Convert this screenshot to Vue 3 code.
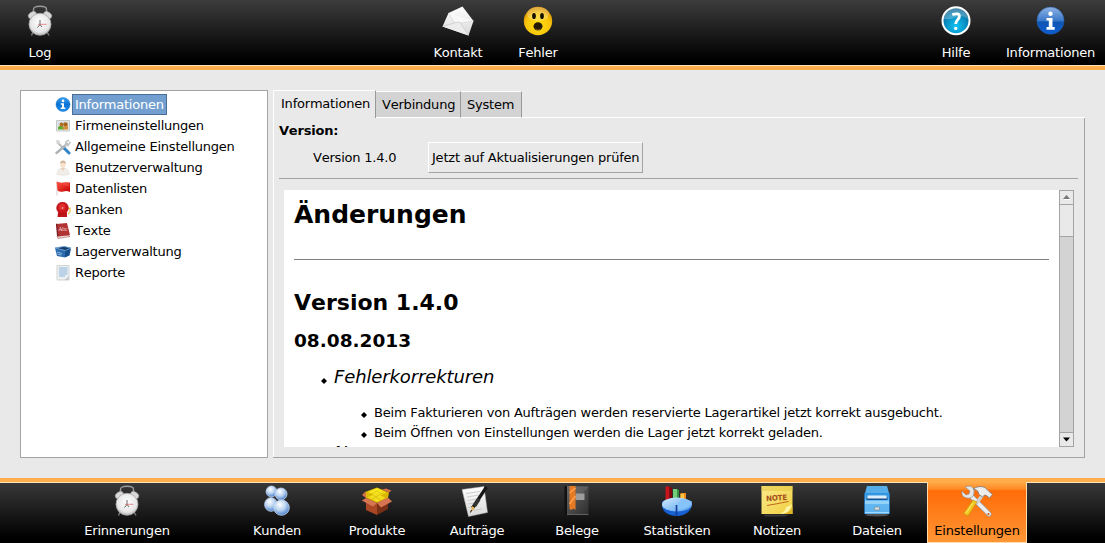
<script setup>
const topLeft = [{ icon: 'clock', label: 'Log' }]
const topCenter = [
  { icon: 'mail', label: 'Kontakt' },
  { icon: 'smiley', label: 'Fehler' },
]
const topRight = [
  { icon: 'help', label: 'Hilfe' },
  { icon: 'info', label: 'Informationen', wide: true },
]
const tree = [
  { icon: 't-info', label: 'Informationen', selected: true },
  { icon: 't-firm', label: 'Firmeneinstellungen' },
  { icon: 't-tools', label: 'Allgemeine Einstellungen' },
  { icon: 't-user', label: 'Benutzerverwaltung' },
  { icon: 't-flag', label: 'Datenlisten' },
  { icon: 't-bell', label: 'Banken' },
  { icon: 't-book', label: 'Texte' },
  { icon: 't-box', label: 'Lagerverwaltung' },
  { icon: 't-report', label: 'Reporte' },
]
const modules = [
  { icon: 'clock', label: 'Erinnerungen', gap: true },
  { icon: 'people', label: 'Kunden' },
  { icon: 'box', label: 'Produkte' },
  { icon: 'paper', label: 'Aufträge' },
  { icon: 'binder', label: 'Belege' },
  { icon: 'chart', label: 'Statistiken' },
  { icon: 'note', label: 'Notizen' },
  { icon: 'cabinet', label: 'Dateien' },
  { icon: 'tools', label: 'Einstellungen', active: true },
]
</script>

<template>
  <div class="window">
    <svg class="defs" width="0" height="0" aria-hidden="true">
      <defs>
        <linearGradient id="gBlue" x1="0" y1="0" x2="0" y2="1"><stop offset="0" stop-color="#8fb4e6" /><stop offset=".5" stop-color="#3a78c8" /><stop offset=".55" stop-color="#0f56b4" /><stop offset="1" stop-color="#0b5cd0" /></linearGradient>
        <radialGradient id="gHelp" cx=".5" cy=".7" r=".65"><stop offset="0" stop-color="#10c4f4" /><stop offset=".6" stop-color="#0a8cc0" /><stop offset="1" stop-color="#0b5f8c" /></radialGradient>
        <radialGradient id="gFace" cx=".5" cy=".65" r=".6"><stop offset="0" stop-color="#ffe00c" /><stop offset=".7" stop-color="#f8c40c" /><stop offset="1" stop-color="#d99406" /></radialGradient>
        <radialGradient id="gDial" cx=".5" cy=".4" r=".6"><stop offset="0" stop-color="#fff" /><stop offset=".75" stop-color="#e6e6e6" /><stop offset="1" stop-color="#b4b4b4" /></radialGradient>
        <radialGradient id="gPerson" cx=".4" cy=".3" r=".75"><stop offset="0" stop-color="#fff" /><stop offset=".5" stop-color="#b9d2f0" /><stop offset="1" stop-color="#3a74c4" /></radialGradient>
        <linearGradient id="gPaper" x1="0" y1="0" x2="0" y2="1"><stop offset="0" stop-color="#fff" /><stop offset="1" stop-color="#d8d8d8" /></linearGradient>
        <linearGradient id="gPie" x1="0" y1="0" x2="1" y2="1"><stop offset="0" stop-color="#d6eeff" /><stop offset="1" stop-color="#4d9cec" /></linearGradient>
        <linearGradient id="gCab" x1="0" y1="0" x2="0" y2="1"><stop offset="0" stop-color="#2b8fdc" /><stop offset=".35" stop-color="#63bbf4" /><stop offset="1" stop-color="#5eb1ec" /></linearGradient>
        <linearGradient id="gNote" x1="0" y1="0" x2="1" y2="1"><stop offset="0" stop-color="#fbeb8e" /><stop offset="1" stop-color="#f0cf3e" /></linearGradient>
        <linearGradient id="gSmall" x1="0" y1="0" x2="0" y2="1"><stop offset="0" stop-color="#3aa2f0" /><stop offset=".5" stop-color="#0a72d4" /><stop offset="1" stop-color="#2490ee" /></linearGradient>
        <linearGradient id="gRed" x1="0" y1="0" x2="1" y2="1"><stop offset="0" stop-color="#ff5a48" /><stop offset="1" stop-color="#c40000" /></linearGradient>
        <linearGradient id="gBinder" x1="0" y1="0" x2="1" y2="1"><stop offset="0" stop-color="#6a6a6a" /><stop offset=".5" stop-color="#4c4c4c" /><stop offset="1" stop-color="#2c2c2c" /></linearGradient>
      </defs>

      <symbol id="clock" viewBox="0 0 32 32">
        <path d="M9.500 7V4.200Q9.500 1.300 16 1.300T22.500 4.200V7" fill="none" stroke="#9b9b9b" stroke-width="1.400" />
        <path d="M9 27 7.500 30.500M23 27l2 3.500" stroke="#777" stroke-width="1.500" />
        <ellipse cx="8.300" cy="10" rx="4.500" ry="3" transform="rotate(-36 8.300 10)" fill="#d9d9d9" stroke="#888" stroke-width=".5" />
        <ellipse cx="23.700" cy="10" rx="4.500" ry="3" transform="rotate(36 23.700 10)" fill="#d9d9d9" stroke="#888" stroke-width=".5" />
        <circle cx="16" cy="19.300" r="11" fill="url(#gDial)" stroke="#a5a5a5" stroke-width=".8" />
        <path d="M16 15V19.500L13.500 22.500M16 19.500l2 2.500" fill="none" stroke="#555" stroke-width=".9" />
        <path d="M14 19.300h8.500" stroke="#e46060" stroke-width=".7" />
      </symbol>
      <symbol id="mail" viewBox="0 0 32 32">
        <path d="M6.500 8 20.500 1.500 31.500 16 26.500 30.500.500 21.500Z" fill="url(#gPaper)" />
        <path d="M6.500 8 13 19 31.500 16" fill="#f8f8f8" stroke="#d4d4d4" stroke-width=".7" />
        <path d="M.5 21.500 14 17.500Q16.500 16 18.500 18L26.500 30.500" fill="#ececec" stroke="#c9c9c9" stroke-width=".7" />
      </symbol>
      <symbol id="smiley" viewBox="0 0 32 32">
        <circle cx="16" cy="16" r="14.200" fill="url(#gFace)" />
        <ellipse cx="16" cy="9" rx="11" ry="7" fill="#fff" opacity=".24" />
        <ellipse cx="12" cy="11" rx="1.900" ry="3.100" fill="#161000" />
        <ellipse cx="20" cy="11" rx="1.900" ry="3.100" fill="#161000" />
        <ellipse cx="16" cy="21.300" rx="4.500" ry="4" fill="#241a04" />
        <path d="M13.500 24Q16 26 18.500 24" stroke="#72591e" fill="none" />
      </symbol>
      <symbol id="help" viewBox="0 0 32 32">
        <circle cx="16" cy="15.700" r="13.500" fill="url(#gHelp)" stroke="#fff" stroke-width="2" />
        <path d="M4 14a12 12 0 0 1 24 0Q22 9 16 12T4 14" fill="#fff" opacity=".25" />
        <path d="M12.300 9.700Q19.500 7.300 19.300 11.500C19.300 14.500 15.600 15 15.700 19" stroke="#fff" stroke-width="2.900" fill="none" />
        <circle cx="15.700" cy="23.400" r="1.700" fill="#fff" />
      </symbol>
      <symbol id="info" viewBox="0 0 32 32">
        <circle cx="15.500" cy="15.700" r="13.600" fill="url(#gBlue)" stroke="#245ba4" stroke-width=".5" />
        <circle cx="15.500" cy="8.700" r="2.200" fill="#fff" />
        <path d="M11.500 13h6v9h2.200v2.800h-8.200V22h2.300v-6.500h-2.300Z" fill="#fff" />
      </symbol>

      <symbol id="people" viewBox="0 0 32 32">
        <g fill="url(#gPerson)" stroke="#c3d9f5" stroke-width=".8">
          <ellipse cx="10" cy="19.500" rx="6.400" ry="6.800" /><circle cx="10.500" cy="6.500" r="5.400" />
          <ellipse cx="20.500" cy="22.700" rx="7.800" ry="7.600" /><circle cx="20" cy="9" r="6" />
        </g>
      </symbol>
      <symbol id="box" viewBox="0 0 32 32">
        <path d="M5 13.500 16 18.500V30L5 25Z" fill="#ad4827" /><path d="M16 18.500 27 12.500V24L16 30Z" fill="#793017" />
        <path d="M4 7 16 2.500 28 7.500 27 13 16 18 5 13Z" fill="#ddb800" />
        <path d="M7 7 16 3 25 7.500 16 12Z" fill="#fae720" /><path d="M7 12 16 8l8 5-8 4Z" fill="#f2dc1c" /><path d="m5 12 11-6 10 6M9 8l12 8M23 7 10 15" stroke="#cdb308" stroke-width=".6" fill="none" />
        <path d="M5 13 16 18 12 21.500 .8 15.500ZM27 12.500 16 18 20 22.500 31 16.500Z" fill="#d77553" />
        <path d="m4 7-3 3 4 3v-4ZM28 7.500l2.500-2L25 3.500l-4 1Z" fill="#d87148" />
      </symbol>
      <symbol id="paper" viewBox="0 0 32 32">
        <path d="m1 4.500 22-3 3.500 26-19 4Z" fill="url(#gPaper)" stroke="#ababab" stroke-width=".5" />
        <path d="m5 8.500 14-2M6 12l12-2M6.500 15.500l10-1.500M7 19l9-1.500M8 22.500l5-1M9 26l12-2" stroke="#bcbcbc" stroke-width=".7" />
        <path d="M25.500 2 11.500 23" stroke="#171717" stroke-width="3.200" /><path d="m18 14-4.500 7" stroke="#333" stroke-width="3.600" />
        <path d="m11 21 3 2-4.500 4.500Z" fill="#e4b354" /><path d="m9.500 27.500 1-2.500" stroke="#171717" />
      </symbol>
      <symbol id="binder" viewBox="0 0 32 32">
        <path d="M4 1h23.500v29H4Z" fill="url(#gBinder)" />
        <path d="M14.500 2h13L14.500 16Z" fill="#777" opacity=".35" />
        <path d="M3.500 1h2.500v29H3.500Z" fill="#111" /><path d="M6 29.500h21.500" stroke="#606060" />
        <path d="M14.500 8.500h9v6.500h-9Z" fill="#9c9c9c" /><path d="M8.500 1h6v24l-2-1.500-2.500 1.500-1.500-1.500Z" fill="#e67a22" />
        <path d="m8.500 8 6-5M8.500 19l6-8" stroke="#ff9f50" stroke-width="1.600" />
      </symbol>
      <symbol id="chart" viewBox="0 0 32 32">
        <path d="M4.500 1.500h4v16h-4Z" fill="#c8141c" /><path d="M8.500 1.500 11 3v14H8.500Z" fill="#84060a" />
        <path d="M12 4h4v13h-4Z" fill="#73cd7b" /><path d="m16 4 2 1v12h-2Z" fill="#349142" />
        <path d="M19.500 8H25v11h-5.500Z" fill="#f08a1c" /><path d="M19.500 9H23v9h-3.500Z" fill="#fbc640" />
        <path d="M1 20c0 7 7 11 14.500 11S31 27 31 18L1 16Z" fill="#1760d2" />
        <ellipse cx="16" cy="19.500" rx="15" ry="7" fill="url(#gPie)" />
        <path d="M16 20 21 13.500 31 16.500Q31 22.500 18 25Z" fill="#86c3fa" /><path d="M15.500 20v10.500" stroke="#143b96" stroke-width="1.600" />
      </symbol>
      <symbol id="note" viewBox="0 0 32 32">
        <path d="M2 29.500h27l-5 2H5Z" fill="#555" opacity=".55" />
        <path d="M.5 1h31v28H.500Z" fill="url(#gNote)" /><path d="M.5 1h31v5H.500Z" fill="#e8ca45" opacity=".6" />
        <path d="M31.500 20q-1 8-10 9h10Z" fill="#dcb427" /><path d="M31 19Q27 22 25 22 25 26 19 29 29 29 31 19" fill="#fff5a6" />
        <text x="5" y="15.500" font-size="7.500" font-weight="bold" font-family="DejaVu Sans" fill="#a5501c" transform="rotate(-4 16 14)" textLength="21" lengthAdjust="spacingAndGlyphs">NOTE</text>
        <path d="M6 20.500Q15 19 27.500 16.500" stroke="#c16423" fill="none" />
      </symbol>
      <symbol id="cabinet" viewBox="0 0 32 32">
        <ellipse cx="16" cy="30" rx="12" ry="1.500" fill="#8a8a8a" opacity=".5" />
        <path d="m6 1h20l2 7H4Z" fill="#55aeea" /><path d="M3 8h26v21H3Z" fill="url(#gCab)" />
        <path d="M5.500 12h21v3h-21Z" fill="#164f93" /><path d="M7 10.500h18l1 3H6Z" fill="#d9edfa" />
        <path d="M3 16h26v3H3Z" fill="#94d2f8" /><path d="M13.500 22h5v3h-5Z" fill="#ddd" stroke="#7794a7" stroke-width=".8" />
        <path d="M3.500 8v21M28.500 8v21" stroke="#226baf" /><path d="M4 27.500h24" stroke="#a0dbff" />
      </symbol>
      <symbol id="tools" viewBox="0 0 32 32">
        <path d="M10 11 28 29" stroke="#999" stroke-width="5" stroke-linecap="round" />
        <path d="m10 11 18 18" stroke="#ececec" stroke-width="3.800" stroke-linecap="round" />
        <path d="m4 2 5 4-1 3-3 1-4-4Q0 12 6 13T13 8 8 1Z" fill="#e6e6e6" stroke="#919191" stroke-width=".7" /><circle cx="27.500" cy="29" r="1.100" fill="#c45615" />
        <path d="M21.500 10 15 19" stroke="#cfcfcf" stroke-width="3.500" /><path d="m16 17-9 14-4.500-2.500L12 15Z" fill="#f0c71f" stroke="#b98909" stroke-width=".5" /><path d="m12 18-7 10" stroke="#ffe878" />
        <path d="M12 4Q18 0 24 2.500l4 4 3.500 3-3 3.500-3-2.500-2-.500-2 2-4-3Q18 5 12 4Z" fill="#ededed" stroke="#777" stroke-width=".8" />
      </symbol>

      <symbol id="t-info" viewBox="0 0 16 16"><circle cx="8" cy="7.500" r="7" fill="url(#gSmall)" stroke="#1672c5" stroke-width=".5" /><circle cx="8" cy="3.900" r="1.300" fill="#fff" /><path d="M5.700 6.200H9v4.300h1.300v1.400H5.700v-1.400H7V7.700H5.700Z" fill="#fff" /></symbol>
      <symbol id="t-firm" viewBox="0 0 16 16"><path d="M1.500 2.500h13V13h-13Z" fill="#e4e7e8" stroke="#c5c9ca" /><path d="M3 4h10v7.500H3Z" fill="#d3dde2" /><path d="M3 11.500V9l3-2 3 2v2.500Z" fill="#64ad35" /><circle cx="6.500" cy="6.500" r="1.900" fill="#b56e27" /><circle cx="10.500" cy="6.500" r="2.300" fill="#a96419" /><path d="M8 11.500V9l5-1v3.500Z" fill="#d78d35" /></symbol>
      <symbol id="t-tools" viewBox="0 0 16 16"><path d="M2 3 9 10" stroke="#b7babb" stroke-width="2" /><path d="m.5 1 4 .5 1 3-2 1Z" fill="#d5d7d8" /><path d="m9 9 5 5" stroke="#2f83c7" stroke-width="3" stroke-linecap="round" /><path d="M1.500 14 12 5" stroke="#b0b3b5" stroke-width="2.400" stroke-linecap="round" /><path d="M14 1 11 3l-.5 3L13 6.500 15.500 3" fill="none" stroke="#c4c7c8" stroke-width="1.700" /></symbol>
      <symbol id="t-user" viewBox="0 0 16 16"><path d="M2 14.500Q2 9 6 8.500h4Q14 9 14 14.500Q8 16 2 14.500Z" fill="#f1ede8" stroke="#dedad6" stroke-width=".6" /><path d="m6 8 2 3 2-3Z" fill="#ead0b8" /><ellipse cx="8" cy="4.500" rx="2.700" ry="3.600" fill="#f6e2cf" /><path d="M5.200 4Q5 .5 8 .5T10.800 4Q8 1.500 5.200 4" fill="#cdb596" /></symbol>
      <symbol id="t-flag" viewBox="0 0 16 16"><path d="M2 1.500v13" stroke="#d8c8c8" /><path d="M1.500 .5Q5 2 8 1.500T15 1.500v9.500Q12 9.500 8.500 10.500T2.500 9.500Z" fill="url(#gRed)" /><path d="M8 2Q11 1 14 2V5.500L8 4Z" fill="#fa5043" opacity=".6" /></symbol>
      <symbol id="t-bell" viewBox="0 0 16 16"><path d="m12 7 3-1v4l-2 2" fill="none" stroke="#e7c345" stroke-width="1.200" /><path d="M3 10.500h9v4.500H2.500Z" fill="#bd1518" /><circle cx="7.500" cy="6" r="5.900" fill="#ca1519" stroke="#a50b10" stroke-width=".5" /><circle cx="7" cy="5" r="3.500" fill="#dc2c2b" /><circle cx="7.500" cy="6" r="1" fill="#ff928a" /></symbol>
      <symbol id="t-book" viewBox="0 0 16 16"><path d="m2 13 11-1 2 1.500-12 2Z" fill="#e8dede" stroke="#9b3a39" stroke-width=".5" /><path d="m1 1 11-1L15 12 3 13.500Z" fill="#b23333" /><path d="M1 1 2 .5l1.500 12.500L2 13Z" fill="#781d20" /><text x="3.200" y="8.200" font-size="6" font-family="Liberation Serif" fill="#f5dada">Abc</text></symbol>
      <symbol id="t-box" viewBox="0 0 16 16"><path d="m.5 4 9-1.500L16 4l-5 2.500Z" fill="#153e6c" /><path d="m0 4 10 2.500V13.500L2 12Z" fill="#2c6cad" /><path d="m10 6.500 6-2L14.500 11.500 10 13.500Z" fill="#16508c" /><path d="M0 4 9 2.500l7 1.500-6 2.500Z" fill="none" stroke="#5b98cf" stroke-width=".8" /><path d="m2 8 5 1.500M2.500 10l4 1" stroke="#9fc5e4" stroke-width=".8" /></symbol>
      <symbol id="t-report" viewBox="0 0 16 16"><path d="M2 .5h12v14.500H2Z" fill="#eeefef" stroke="#d1d4d5" /><path d="M4 3h8.500M4 5h8.500M4 7h8.500M4 9h8.500M4 11h6" stroke="#8ab5df" stroke-width="1.200" /><path d="m9.500 15 4.500-4v4Z" fill="#c6cbce" /></symbol>
    </svg>

    <header class="topbar">
      <nav class="side"><div v-for="b in topLeft" :key="b.label" class="tool"><svg class="ico"><use :href="'#' + b.icon" /></svg><span>{{ b.label }}</span></div></nav>
      <nav><div v-for="b in topCenter" :key="b.label" class="tool"><svg class="ico"><use :href="'#' + b.icon" /></svg><span>{{ b.label }}</span></div></nav>
      <nav class="side end"><div v-for="b in topRight" :key="b.label" class="tool" :class="{ wide: b.wide }"><svg class="ico"><use :href="'#' + b.icon" /></svg><span>{{ b.label }}</span></div></nav>
    </header>

    <main class="content">
      <aside class="tree">
        <div v-for="t in tree" :key="t.label" class="node" :class="{ selected: t.selected }">
          <svg class="tico"><use :href="'#' + t.icon" /></svg><span>{{ t.label }}</span>
        </div>
      </aside>

      <section class="tabs">
        <div class="tabrow">
          <div class="tab current">Informationen</div>
          <div class="tab second">Verbindung</div>
          <div class="tab third">System</div>
          <div class="rest"></div>
        </div>
        <div class="pane">
          <div class="title">Version:</div>
          <div class="update"><span class="ver">Version 1.4.0</span><button><span>Jetzt auf Aktualisierungen prüfen</span></button></div>
          <div class="scroll">
            <article class="doc">
              <h1>Änderungen</h1>
              <hr>
              <h2>Version 1.4.0</h2>
              <h3>08.08.2013</h3>
              <div class="group"><svg class="dot" viewBox="0 0 6 6"><path d="M3 0 6 3 3 6 0 3Z" /></svg><span>Fehlerkorrekturen</span></div>
              <div class="item first"><svg class="dot" viewBox="0 0 6 6"><path d="M3 0 6 3 3 6 0 3Z" /></svg><span>Beim Fakturieren von Aufträgen werden reservierte Lagerartikel jetzt korrekt ausgebucht.</span></div>
              <div class="item"><svg class="dot" viewBox="0 0 6 6"><path d="M3 0 6 3 3 6 0 3Z" /></svg><span>Beim Öffnen von Einstellungen werden die Lager jetzt korrekt geladen.</span></div>
              <div class="group next"><span>Neuerungen</span></div>
            </article>
            <div class="bar">
              <div class="arrow"><svg viewBox="0 0 7 5"><path d="M0 4 3.500 0 7 4Z" fill="#777" /><path d="M1 4.500h6" stroke="#fff" /></svg></div>
              <div class="thumb"></div>
              <div class="track"></div>
              <div class="arrow down"><svg viewBox="0 0 7 5"><path d="M0 .5h7L3.500 4.500Z" /></svg></div>
            </div>
          </div>
        </div>
      </section>
    </main>

    <footer class="bottombar">
      <div v-for="m in modules" :key="m.label" class="module" :class="{ gap: m.gap, active: m.active }">
        <svg class="ico"><use :href="'#' + m.icon" /></svg><span>{{ m.label }}</span>
      </div>
    </footer>
  </div>
</template>

<style>
body { margin: 0; overflow: hidden; }
</style>

<style scoped>
* { box-sizing: border-box; }
.window { width: 1105px; height: 543px; display: flex; flex-direction: column; background: #e9e9e9; font: 13px/20px "DejaVu Sans", sans-serif; font-kerning: none; letter-spacing: -0.21px; color: #000; white-space: nowrap; overflow: hidden; }
.defs { position: absolute; }
.topbar { height: 70px; flex: none; display: flex; color: #fff; background: linear-gradient(#3c3c3c, #000 60px) 0 0 / 100% 65px no-repeat, #ffad4b; box-shadow: inset 0 -4px #ffad4b, inset 0 -5px #ffe3bd; }
.topbar nav { display: flex; }
.topbar .side { width: 418px; }
.topbar .end { margin-left: auto; width: 189px; }
.tool { width: 80px; height: 65px; padding-top: 5px; display: flex; flex-direction: column; align-items: center; gap: 6px; }
.tool.wide { width: 109px; }
.ico { width: 32px; height: 32px; display: block; flex: none; }
.content { height: 408px; flex: none; display: flex; padding: 20px; gap: 5px; }
.tree { width: 248px; height: 368px; border: 1px solid #a3a3a3; background: #fff; padding: 3px 0 0 34px; }
.node { height: 21px; display: flex; align-items: center; letter-spacing: -0.23px; }
.tico { width: 16px; height: 16px; flex: none; margin-right: 1px; }
.node span { height: 21px; line-height: 19px; padding: 0 2px; border: 1px solid transparent; }
.selected span { color: #fff; background: #729fcf; border-color: #4b6e99; width: 95px; }
.tabs { width: 812px; height: 368px; display: flex; flex-direction: column; }
.tabrow { display: flex; align-items: flex-end; height: 28px; flex: none; }
.tab { height: 27px; background: #d3d3d3; border-top: 1px solid #fff; border-right: 1px solid #999; border-bottom: 1px solid #fff; padding-left: 6px; line-height: 25px; }
.current { height: 28px; width: 103px; background: #e9e9e9; border-left: 1px solid #fff; border-bottom: 0; padding-left: 7px; }
.second { width: 85px; }
.third { width: 61px; }
.rest { flex: 1; border-bottom: 1px solid #fff; }
.pane { flex: 1; border: solid #a3a3a3; border-width: 0 1px 1px 0; box-shadow: inset 1px 0 #fff; padding: 3px 5px 0 6px; }
.title { font-weight: bold; height: 20px; }
.update { height: 38px; display: flex; align-items: flex-start; padding: 1px 0 0 34px; border-bottom: 1px solid #a3a3a3; width: 799px; }
.ver { width: 115px; line-height: 31px; }
button { width: 215px; height: 31px; padding: 0 0 0 3px; text-align: left; background: #e9e9e9; border: 1px solid; border-color: #fff #a3a3a3 #a3a3a3 #fff; font: inherit; font-kerning: none; letter-spacing: inherit; color: #000; }
.scroll { display: flex; margin: 11px 0 0 5px; height: 257px; width: 790px; background: #fff; }
.doc { flex: 1; overflow: hidden; padding: 10px 10px 0; height: 257px; }
h1, h2, h3 { margin: 0; font-weight: bold; letter-spacing: 0; }
h1 { font-size: 25px; line-height: 30px; }
hr { margin: 29px 0 0; border: 0; height: 1px; background: #808080; }
h2 { margin-top: 30px; font-size: 22px; line-height: 26px; }
h3 { margin-top: 14px; font-size: 18.500px; line-height: 22px; }
.group { height: 22px; margin-top: 14px; padding-left: 27px; display: flex; font-size: 18px; line-height: 22px; font-style: italic; letter-spacing: -0.13px; }
.group .dot { margin: 12px 7px 0 0; }
.group.next { margin-top: -1px; padding-left: 40px; }
.dot { width: 6px; height: 6px; flex: none; }
.item { height: 20px; display: flex; padding-left: 67px; }
.item .dot { margin: 9px 7px 0 0; }
.item.first { margin-top: 15px; }
.bar { width: 15px; border: 1px solid #a3a3a3; display: flex; flex-direction: column; background: #e9e9e9; }
.arrow { height: 14px; border-bottom: 1px solid #a3a3a3; display: flex; align-items: center; justify-content: center; }
.arrow svg { width: 7px; height: 5px; display: block; }
.thumb { height: 32px; border-bottom: 1px solid #a3a3a3; }
.track { flex: 1; background: #d3d3d3; }
.down { border-bottom: 0; border-top: 1px solid #a3a3a3; }
.bottombar { height: 65px; flex: none; display: flex; padding: 4px 0 0 77px; color: #fff; background: linear-gradient(#ffad4b 4px, #ffe3bd 4px, #ffe3bd 5px, #383838 5px, #000 60px); }
.module { width: 100px; height: 61px; padding-top: 3px; display: flex; flex-direction: column; align-items: center; gap: 4px; }
.gap { margin-right: 50px; }
.active { color: #000; border: 1px solid #ffdcae; border-top: 0; background: linear-gradient(#ffad4b, #ff8a25 7px, #ff6c08 9px, #ff9635); }
</style>
